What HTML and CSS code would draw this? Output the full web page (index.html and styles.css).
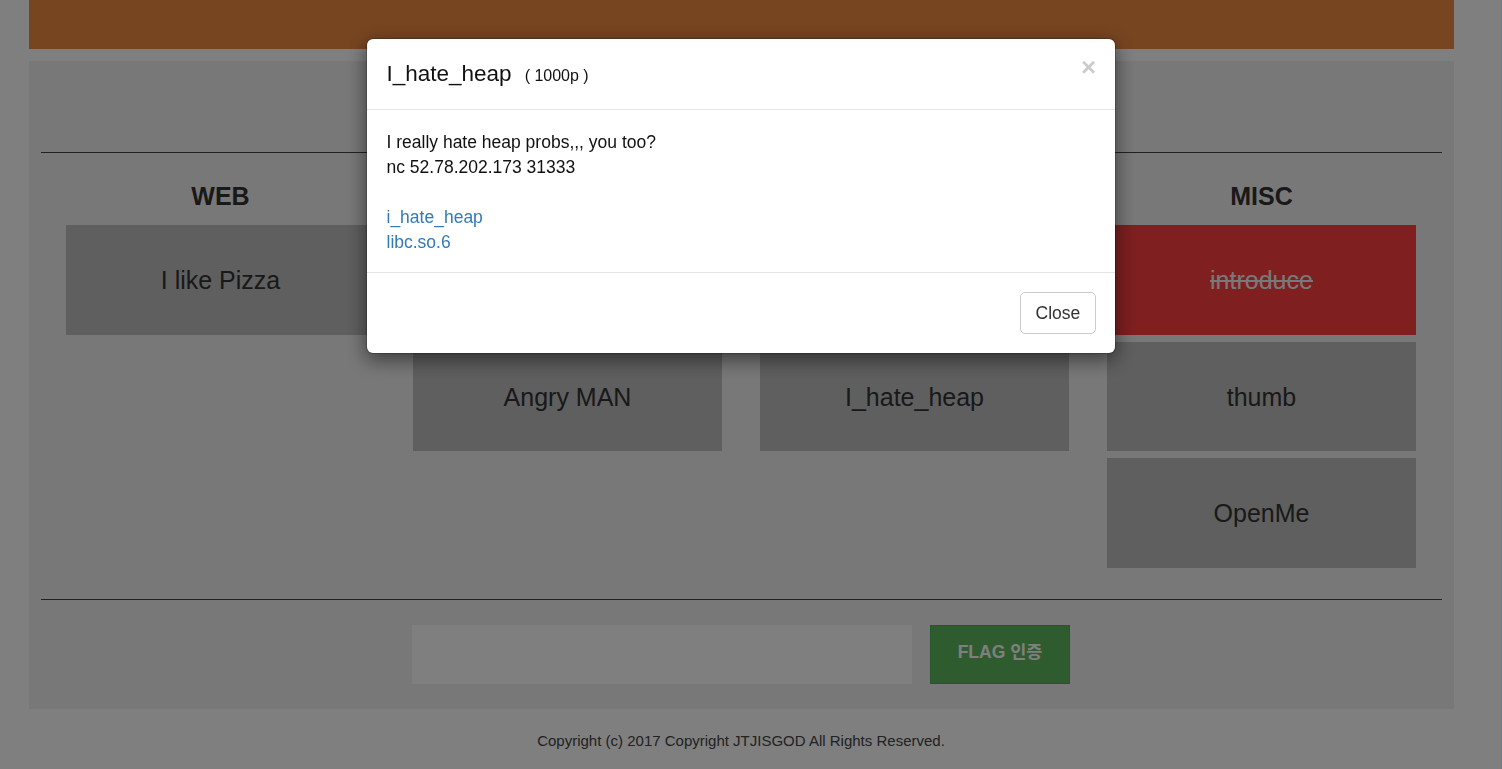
FILE: index.html
```html
<!DOCTYPE html>
<html lang="ko">
<head>
<meta charset="utf-8">
<title>JTJISGOD CTF</title>
<link rel="stylesheet" href="styles.css">
</head>
<body class="modal-open">
  <div class="page">
    <header class="topbar"></header>
    <main class="board">
      <hr class="rule">
      <div class="categories">
        <section class="cat">
          <h2 class="cat-title">WEB</h2>
          <div class="chal">I like Pizza</div>
        </section>
        <section class="cat">
          <h2 class="cat-title">REV</h2>
          <div class="chal">EasyRev</div>
          <div class="chal">Angry MAN</div>
        </section>
        <section class="cat">
          <h2 class="cat-title">PWN</h2>
          <div class="chal">EasyPwn</div>
          <div class="chal">I_hate_heap</div>
        </section>
        <section class="cat">
          <h2 class="cat-title">MISC</h2>
          <div class="chal solved">introduce</div>
          <div class="chal">thumb</div>
          <div class="chal">OpenMe</div>
        </section>
      </div>
      <hr class="rule">
      <form class="flag-form">
        <input class="flag-input" type="text">
        <button class="flag-btn" type="button">FLAG 인증</button>
      </form>
    </main>
    <footer class="footer">Copyright (c) 2017 Copyright JTJISGOD All Rights Reserved.</footer>
  </div>

  <div class="backdrop"></div>

  <div class="modal">
    <div class="modal-dialog">
      <div class="modal-content">
        <div class="modal-header">
          <h4 class="modal-title">I_hate_heap<span class="points">( 1000p )</span></h4>
          <button class="close" type="button">×</button>
        </div>
        <div class="modal-body">
          I really hate heap probs,,, you too?<br>
          nc 52.78.202.173 31333<br>
          <br>
          <a href="#">i_hate_heap</a><br>
          <a href="#">libc.so.6</a>
        </div>
        <div class="modal-footer">
          <button class="btn" type="button">Close</button>
        </div>
      </div>
    </div>
  </div>

  <div class="window-edge"></div>
</body>
</html>
```

FILE: styles.css
```css
html {
  background: #fff;
}

body {
  margin: 0;
  padding-right: 20px;
  background: #fff;
  color: #333;
  font-family: "Liberation Sans", Arial, "Noto Sans CJK KR", sans-serif;
  font-size: 17.5px;
  line-height: 25px;
}

.page {
  width: 1425px;
  margin: 0 auto;
}

.topbar {
  height: 49px;
  margin-bottom: 12px;
  background: #f08a42;
}

.board {
  background: #f0f0f0;
  padding: 91px 12px 25px;
}

.rule {
  margin: 0;
  border: 0;
  border-top: 1px solid #444;
  height: 0;
}

.categories {
  display: grid;
  grid-template-columns: repeat(4, 309px);
  column-gap: 38px;
  justify-content: center;
  align-items: start;
  margin: 27.6px 0 30.75px;
}

.cat {
  display: flex;
  flex-direction: column;
  gap: 7px;
}

.cat-title {
  margin: 0 0 7.4px;
  font-size: 25px;
  line-height: 30px;
  font-weight: bold;
  text-align: center;
  color: #333;
}

.chal {
  height: 109.75px;
  display: flex;
  align-items: center;
  justify-content: center;
  background: #bebebe;
  color: #333;
  font-size: 25px;
  line-height: 30px;
}

.chal.solved {
  background: #ff3f40;
  color: #f2f2f2;
  text-decoration: line-through;
}

.flag-form {
  display: flex;
  justify-content: center;
  gap: 18px;
  margin: 25px 0 0;
}

.flag-input {
  width: 500px;
  height: 59px;
  box-sizing: border-box;
  border: 0;
  background: #fff;
  padding: 0 12px;
  font: inherit;
}

.flag-btn {
  width: 140px;
  height: 59px;
  box-sizing: border-box;
  border: 1px solid #4cae4c;
  background: #5cb85c;
  color: #fff;
  font-family: "Liberation Sans", Arial, "Noto Sans CJK KR", sans-serif;
  font-size: 17.5px;
  line-height: 20px;
  font-weight: bold;
  padding: 0 0 5px;
}

.footer {
  margin-top: 21px;
  text-align: center;
  font-size: 15px;
  line-height: 21px;
  color: #444;
}

.backdrop {
  position: fixed;
  inset: 0;
  background: rgba(0, 0, 0, 0.5);
}

.window-edge {
  position: fixed;
  top: 0;
  right: 0;
  bottom: 0;
  width: 1px;
  background: #2d8be2;
}

.modal {
  position: fixed;
  top: 0;
  left: 0;
  right: 20px;
}

.modal-dialog {
  width: 750px;
  margin: 38px auto 0;
}

.modal-content {
  background: #fff;
  background-clip: padding-box;
  border: 1px solid rgba(0, 0, 0, 0.2);
  border-radius: 7px;
  box-shadow: 0 6px 19px rgba(0, 0, 0, 0.5);
}

.modal-header {
  display: flex;
  justify-content: space-between;
  align-items: flex-start;
  padding: 19.5px 18.75px 18px 19.5px;
  border-bottom: 1px solid #e5e5e5;
}

.modal-title {
  margin: 0;
  font-size: 22.5px;
  line-height: 30.5px;
  font-weight: normal;
  color: #111;
}

.points {
  margin-left: 13px;
  font-size: 16px;
  color: #111;
}

.close {
  margin-top: -4.75px;
  padding: 0;
  border: 0;
  background: none;
  color: #000;
  opacity: 0.2;
  font-family: "Liberation Sans", Arial, sans-serif;
  font-size: 26px;
  font-weight: bold;
  line-height: 1;
}

.modal-body {
  padding: 19.75px 18.75px 16.75px 19.5px;
  color: #111;
}

.modal-body a {
  color: #337ab7;
  text-decoration: none;
}

.modal-footer {
  padding: 19.5px 18.75px 19px;
  border-top: 1px solid #e5e5e5;
  text-align: right;
}

.btn {
  display: inline-block;
  padding: 7.5px 15px;
  border: 1px solid #ccc;
  border-radius: 5px;
  background: #fff;
  color: #333;
  font-family: "Liberation Sans", Arial, sans-serif;
  font-size: 17.5px;
  line-height: 25px;
  vertical-align: top;
}
```
